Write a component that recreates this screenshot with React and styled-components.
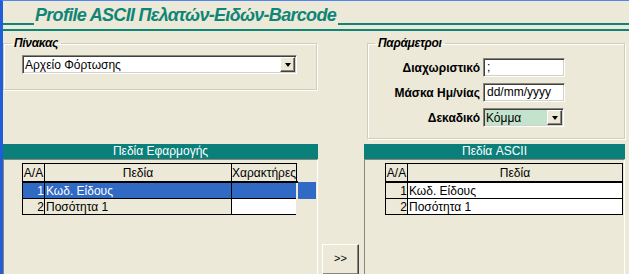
import React from 'react';
import styled, { createGlobalStyle } from 'styled-components';

const GlobalStyle = createGlobalStyle`
  html, body {
    margin: 0;
    padding: 0;
    background: #ece9d8;
  }
  body {
    font-family: "Liberation Sans", Arial, sans-serif;
    font-size: 11px;
    color: #000;
  }
`;

const TEAL = '#0e8577';

const Frame = styled.div`
  width: 626px;
  height: 273px;
  border-left: 3px solid #1f5ed8;
  border-top: 1px solid #4f86f0;
  background: #ece9d8;
  overflow: hidden;
  display: flex;
  flex-direction: column;
`;

const TitleRow = styled.div`
  display: flex;
  align-items: flex-end;
  height: 25px;
`;

const TitleLine = styled.div`
  flex: ${(p) => (p.grow ? 1 : 'none')};
  width: ${(p) => (p.grow ? 'auto' : '31px')};
  height: 2px;
  margin-bottom: 1px;
  background: ${TEAL};
`;

const TitleText = styled.div`
  font-family: "Liberation Sans", Arial, sans-serif;
  font-weight: bold;
  font-style: italic;
  font-size: 18px;
  letter-spacing: -0.7px;
  line-height: 21px;
  color: ${TEAL};
  padding: 0 2px 0 1px;
  white-space: nowrap;
`;

const Rule = styled.div`
  height: 2px;
  margin-top: 3px;
  background: ${TEAL};
`;

const TopRow = styled.div`
  display: flex;
  align-items: flex-start;
  margin-top: 6px;
  height: 102px;
`;

const Group = styled.fieldset`
  margin: 0;
  padding: 0;
  width: ${(p) => p.w}px;
  height: ${(p) => p.h}px;
  margin-left: ${(p) => p.ml || 0}px;
  border: 1px solid #d0cdbb;
  box-shadow: inset 1px 1px 0 #fff, 1px 1px 0 #fff;
  box-sizing: border-box;
`;

const Legend = styled.legend`
  margin-left: 7px;
  padding: 0 3px;
  font-weight: bold;
  font-style: italic;
  font-size: 12px;
  line-height: 12px;
  letter-spacing: -0.3px;
`;

const SelectBox = styled.div`
  display: flex;
  align-items: center;
  width: 275px;
  height: 19px;
  margin: 6px 0 0 18px;
  box-sizing: border-box;
  border-top: 1px solid #8a877a;
  border-left: 1px solid #8a877a;
  border-right: 1px solid #fff;
  border-bottom: 1px solid #fff;
  box-shadow: inset 1px 1px 0 #404040, inset -1px -1px 0 #d4d0c8;
  background: ${(p) => p.bg || '#fff'};
  font-size: 12px;
  padding-left: 2px;
  ${(p) => p.w && `width: ${p.w}px; margin: 0;`}
`;

const SelectValue = styled.span`
  flex: 1;
  white-space: nowrap;
  overflow: hidden;
`;

const ArrowButton = styled.div`
  width: 15px;
  height: 15px;
  margin-right: 1px;
  box-sizing: border-box;
  background: #ece9d8;
  border-top: 1px solid #fff;
  border-left: 1px solid #fff;
  border-right: 1px solid #404040;
  border-bottom: 1px solid #404040;
  box-shadow: inset -1px -1px 0 #8a877a;
  display: flex;
  align-items: center;
  justify-content: center;
  &::after {
    content: '';
    border-left: 3.5px solid transparent;
    border-right: 3.5px solid transparent;
    border-top: 4px solid #000;
    margin-top: 1px;
  }
`;

const ParamGrid = styled.div`
  display: grid;
  grid-template-columns: 112px 82px;
  column-gap: 3px;
  row-gap: 6px;
  align-items: center;
  margin: 9px 0 0 0;
`;

const ParamLabel = styled.div`
  font-weight: bold;
  font-size: 12px;
  text-align: right;
  white-space: nowrap;
`;

const TextInput = styled.div`
  width: 82px;
  height: 19px;
  box-sizing: border-box;
  border-top: 1px solid #8a877a;
  border-left: 1px solid #8a877a;
  border-right: 1px solid #fff;
  border-bottom: 1px solid #fff;
  box-shadow: inset 1px 1px 0 #404040, inset -1px -1px 0 #d4d0c8;
  background: #fff;
  font-size: 12px;
  line-height: 17px;
  padding-left: 3px;
`;

const BottomRow = styled.div`
  display: flex;
  margin-top: 5px;
  flex: 1;
`;

const Panel = styled.div`
  width: ${(p) => p.w}px;
  display: flex;
  flex-direction: column;
`;

const PanelHeader = styled.div`
  height: 15px;
  background: #0b7f7a;
  color: #fff;
  font-size: 12px;
  line-height: 15px;
  text-align: center;
`;

const PanelBody = styled.div`
  flex: 1;
  border-top: 1px solid #8a877a;
  border-left: 1px solid #8a877a;
  border-right: 1px solid #fff;
  padding: 3px 0 0 ${(p) => p.pl}px;
`;

const Table = styled.table`
  border-collapse: collapse;
  font-size: 12px;
  width: ${(p) => p.w}px;
  table-layout: fixed;
`;

const Th = styled.th`
  font-weight: normal;
  height: 17px;
  padding: 0;
  border: 1px solid #000;
  border-bottom-width: 2px;
  text-align: ${(p) => p.align || 'center'};
  white-space: nowrap;
  overflow: hidden;
`;

const Td = styled.td`
  height: 15px;
  padding: 0 0 0 1px;
  border: 1px solid #000;
  text-align: ${(p) => p.align || 'left'};
  white-space: nowrap;
  background: ${(p) => (p.sel ? '#316ac5' : p.bg || 'transparent')};
  color: ${(p) => (p.sel ? '#fff' : '#000')};
`;

const FillCell = styled.td`
  padding: 0;
  border: none;
  border-left: 2px solid #ece9d8;
  background: ${(p) => (p.sel ? '#316ac5' : 'transparent')};
`;

const BlankHead = styled.th`
  padding: 0;
  border: none;
`;

const Gutter = styled.div`
  width: 46px;
  display: flex;
  align-items: flex-end;
  justify-content: flex-start;
`;

const MoveButton = styled.button`
  width: 37px;
  height: 31px;
  margin: 0 0 -1px 4px;
  box-sizing: border-box;
  background: #ece9d8;
  border-top: 1px solid #fff;
  border-left: 1px solid #fff;
  border-right: 1px solid #404040;
  border-bottom: 1px solid #404040;
  box-shadow: inset -1px -1px 0 #8a877a;
  font-family: "Liberation Sans", Arial, sans-serif;
  font-size: 11px;
  padding: 0 0 4px 0;
`;

const rows = [
  { n: 1, name: 'Κωδ. Είδους', sel: true },
  { n: 2, name: 'Ποσότητα 1' },
];

export default function App() {
  return (
    <Frame>
      <GlobalStyle />
      <TitleRow>
        <TitleLine />
        <TitleText>Profile ASCII Πελατών-Ειδών-Barcode</TitleText>
        <TitleLine grow />
      </TitleRow>
      <Rule />
      <TopRow>
        <Group w={314} h={53}>
          <Legend>Πίνακας</Legend>
          <SelectBox>
            <SelectValue>Αρχείο Φόρτωσης</SelectValue>
            <ArrowButton />
          </SelectBox>
        </Group>
        <Group w={258} h={102} ml={50}>
          <Legend>Παράμετροι</Legend>
          <ParamGrid>
            <ParamLabel>Διαχωριστικό</ParamLabel>
            <TextInput>;</TextInput>
            <ParamLabel>Μάσκα Ημ/νίας</ParamLabel>
            <TextInput>dd/mm/yyyy</TextInput>
            <ParamLabel>Δεκαδικό</ParamLabel>
            <SelectBox w={81} bg="#c4e3cd">
              <SelectValue>Κόμμα</SelectValue>
              <ArrowButton />
            </SelectBox>
          </ParamGrid>
        </Group>
      </TopRow>
      <BottomRow>
        <Panel w={315}>
          <PanelHeader>Πεδία Εφαρμογής</PanelHeader>
          <PanelBody pl={18}>
            <Table w={293}>
              <colgroup>
                <col style={{ width: 22 }} />
                <col style={{ width: 187 }} />
                <col style={{ width: 65 }} />
                <col style={{ width: 19 }} />
              </colgroup>
              <thead>
                <tr>
                  <Th>Α/Α</Th>
                  <Th>Πεδία</Th>
                  <Th align="left">Χαρακτήρες</Th>
                  <BlankHead />
                </tr>
              </thead>
              <tbody>
                {rows.map((r) => (
                  <tr key={r.n}>
                    <Td align="right" sel={r.sel}>{r.n}</Td>
                    <Td sel={r.sel}>{r.name}</Td>
                    <Td sel={r.sel} bg="#fff"></Td>
                    <FillCell sel={r.sel} />
                  </tr>
                ))}
              </tbody>
            </Table>
          </PanelBody>
        </Panel>
        <Gutter>
          <MoveButton>&gt;&gt;</MoveButton>
        </Gutter>
        <Panel w={261}>
          <PanelHeader>Πεδία ASCII</PanelHeader>
          <PanelBody pl={20}>
            <Table w={237}>
              <colgroup>
                <col style={{ width: 22 }} />
                <col style={{ width: 215 }} />
              </colgroup>
              <thead>
                <tr>
                  <Th>Α/Α</Th>
                  <Th>Πεδία</Th>
                </tr>
              </thead>
              <tbody>
                {rows.map((r) => (
                  <tr key={r.n}>
                    <Td align="right">{r.n}</Td>
                    <Td bg="#fff">{r.name}</Td>
                  </tr>
                ))}
              </tbody>
            </Table>
          </PanelBody>
        </Panel>
      </BottomRow>
    </Frame>
  );
}
